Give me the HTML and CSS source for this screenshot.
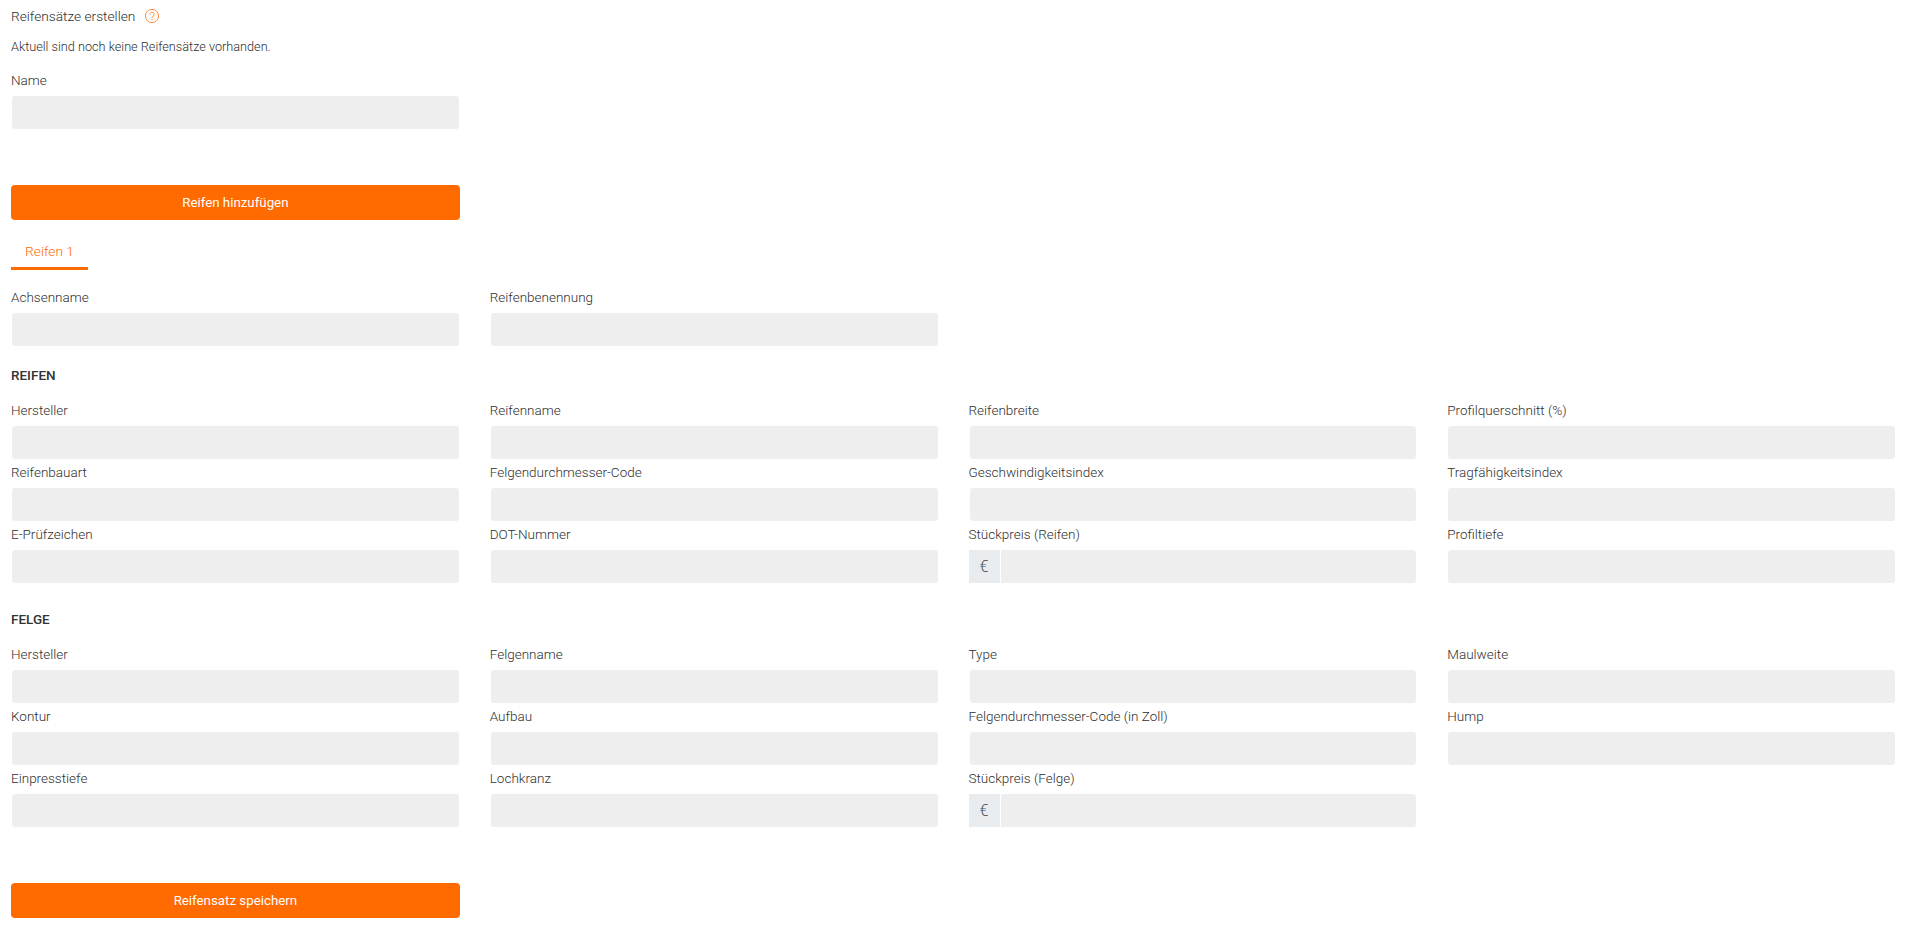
FILE: index.html
```html
<!DOCTYPE html>
<html lang="de">
<head>
<meta charset="utf-8">
<title>Reifensätze erstellen</title>
<link rel="stylesheet" href="styles.css">
</head>
<body>
<main class="page">
  <div class="title-row">
    <span>Reifensätze erstellen</span>
    <svg class="help" width="16" height="16" viewBox="0 0 16 16" fill="none" stroke="#ff6b00" stroke-width="1" stroke-opacity=".75">
      <circle cx="8" cy="8" r="6.6"/>
      <path d="M5.9 6.4a2.1 2.1 0 1 1 3.3 1.7c-.8.5-1.2.9-1.2 1.8" stroke-linecap="round"/>
      <circle cx="8" cy="11.6" r=".5" fill="#ff6b00" stroke="none"/>
    </svg>
  </div>
  <p class="note">Aktuell sind noch keine Reifensätze vorhanden.</p>

  <div class="grid first">
    <div class="field"><label>Name</label><input class="input"></div>
  </div>

  <div class="grid action-top"><button class="btn">Reifen hinzufügen</button></div>

  <div class="tabs"><span class="tab">Reifen 1</span></div>

  <div class="grid axle">
    <div class="field"><label>Achsenname</label><input class="input"></div>
    <div class="field"><label>Reifenbenennung</label><input class="input"></div>
  </div>

  <h2 class="section">REIFEN</h2>
  <div class="grid">
    <div class="field"><label>Hersteller</label><input class="input"></div>
    <div class="field"><label>Reifenname</label><input class="input"></div>
    <div class="field"><label>Reifenbreite</label><input class="input"></div>
    <div class="field"><label>Profilquerschnitt (%)</label><input class="input"></div>
    <div class="field"><label>Reifenbauart</label><input class="input"></div>
    <div class="field"><label>Felgendurchmesser-Code</label><input class="input"></div>
    <div class="field"><label>Geschwindigkeitsindex</label><input class="input"></div>
    <div class="field"><label>Tragfähigkeitsindex</label><input class="input"></div>
    <div class="field"><label>E-Prüfzeichen</label><input class="input"></div>
    <div class="field"><label>DOT-Nummer</label><input class="input"></div>
    <div class="field"><label>Stückpreis (Reifen)</label><div class="group"><span class="addon">€</span><input class="input"></div></div>
    <div class="field"><label>Profiltiefe</label><input class="input"></div>
  </div>

  <h2 class="section felge">FELGE</h2>
  <div class="grid">
    <div class="field"><label>Hersteller</label><input class="input"></div>
    <div class="field"><label>Felgenname</label><input class="input"></div>
    <div class="field"><label>Type</label><input class="input"></div>
    <div class="field"><label>Maulweite</label><input class="input"></div>
    <div class="field"><label>Kontur</label><input class="input"></div>
    <div class="field"><label>Aufbau</label><input class="input"></div>
    <div class="field"><label>Felgendurchmesser-Code (in Zoll)</label><input class="input"></div>
    <div class="field"><label>Hump</label><input class="input"></div>
    <div class="field"><label>Einpresstiefe</label><input class="input"></div>
    <div class="field"><label>Lochkranz</label><input class="input"></div>
    <div class="field"><label>Stückpreis (Felge)</label><div class="group"><span class="addon">€</span><input class="input"></div></div>
  </div>

  <div class="grid action-bottom"><button class="btn">Reifensatz speichern</button></div>
</main>
</body>
</html>
```
FILE: styles.css
```css
* { box-sizing: border-box; }
html, body { margin: 0; background: #fff; }
body {
  font-family: Roboto, "Liberation Sans", sans-serif;
  font-weight: 300;
  font-size: 13.7px;
  color: #2f2f2f;
}
.page { padding: 0 9px 0 11px; height: 926px; overflow: hidden; }
.title-row { display: flex; align-items: center; gap: 9px; height: 32px; }
.help { display: block; }
.note { margin: 0; height: 28px; line-height: 30px; font-size: 12.7px; }
.grid { display: grid; grid-template-columns: repeat(4, 448.75px); column-gap: 30px; }
.first { margin-top: 8px; }
.field { display: flex; flex-direction: column; height: 62px; }
.field label { display: block; height: 27px; line-height: 24px; font-size: 13.5px; }
.input {
  display: block; width: 100%; height: 35px; margin: 0; padding: 0 12px;
  background: #eee; border: 1px solid #fff; border-radius: 4px; outline: 0;
  font: inherit;
}
.group { display: flex; height: 35px; }
.addon {
  flex: none; width: 31px; height: 33px; margin-top: 1px;
  display: flex; align-items: center; justify-content: center;
  background: #e9ecef; font-size: 16px; color: #495057;
}
.group .input { flex: 1; min-width: 0; width: auto; border-top-left-radius: 0; border-bottom-left-radius: 0; }
.action-top { margin-top: 55px; }
.btn {
  display: block; width: 100%; height: 35px; padding: 0; border: 0; border-radius: 4px;
  background: #ff6b00; color: #fff; font: inherit; font-size: 13.3px; font-weight: 400; cursor: pointer;
}
.tabs { display: flex; margin-top: 13px; height: 37px; }
.tab {
  width: 77px; height: 37px; border-bottom: 3px solid #ff6b00; color: #ff6b00;
  display: flex; justify-content: center; align-items: center; padding-top: 2px;
}
.axle { margin-top: 15px; }
.section { margin: 18px 0 13px; font: inherit; font-size: 13.5px; font-weight: 500; line-height: 20px; color: #333; }
.felge { margin-top: 25px; margin-bottom: 13px; }
.action-bottom { margin-top: 55px; }
```
